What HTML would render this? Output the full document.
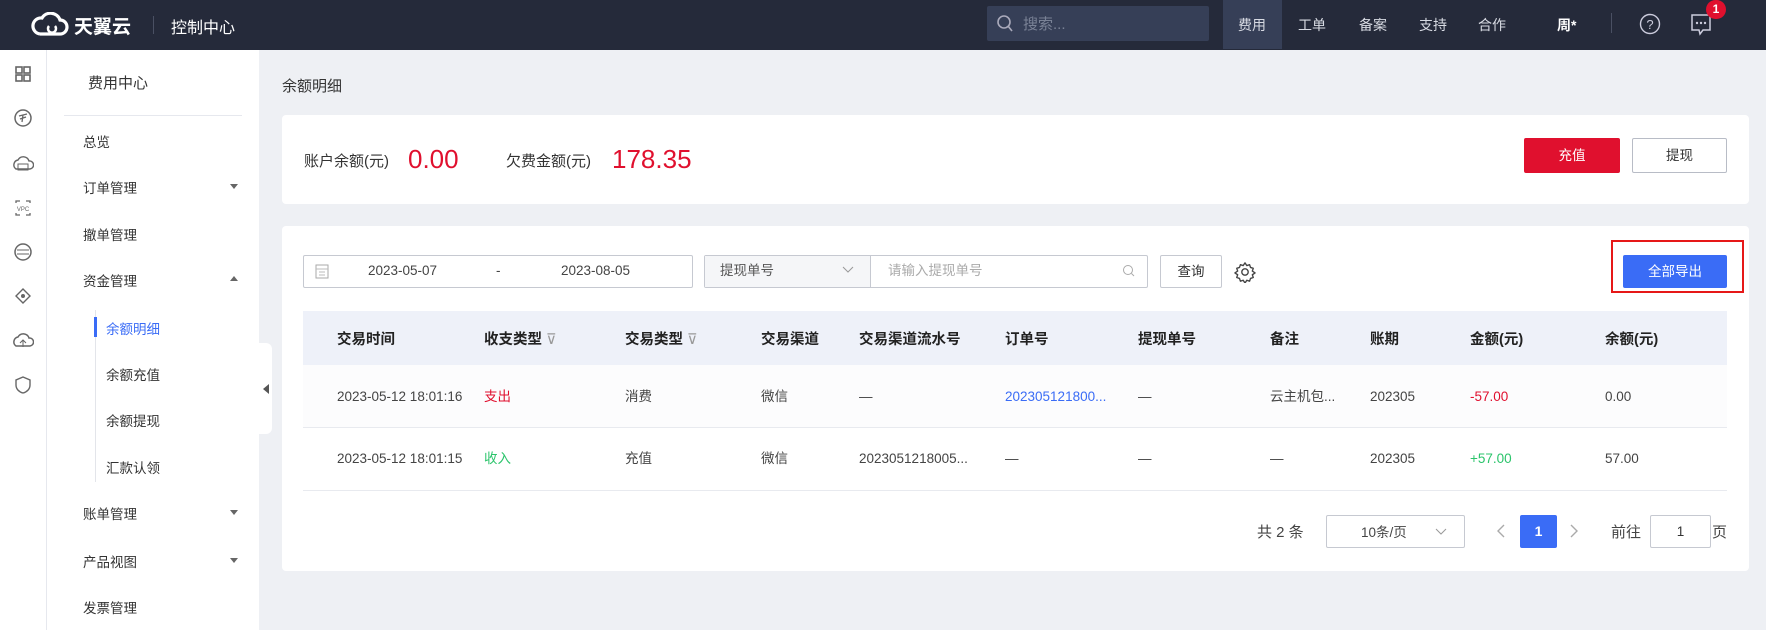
<!DOCTYPE html>
<html><head><meta charset="utf-8"><style>
*{margin:0;padding:0;box-sizing:border-box}
body{width:1766px;height:630px;overflow:hidden;background:#eef0f4;font-family:"Liberation Sans","Noto Sans CJK SC",sans-serif;color:#333;font-size:14px;position:relative}
.a{position:absolute;white-space:nowrap}
.top{position:absolute;left:0;top:0;width:1766px;height:50px;background:#252a3a}
.nav{color:#d8dbe3;font-size:14px;top:15px}
.side1{position:absolute;left:0;top:50px;width:47px;height:580px;background:#fff;border-right:1px solid #e6e8ee}
.side2{position:absolute;left:47px;top:50px;width:212px;height:580px;background:#fff}
.mi{font-size:13.5px;color:#333;left:83px}
.si{font-size:13.5px;color:#333;left:106px}
.arr{position:absolute;left:230px;width:0;height:0;border-left:4px solid transparent;border-right:4px solid transparent;border-top:5px solid #666}
.card{position:absolute;background:#fff;border-radius:4px}
.th{font-weight:bold;font-size:14.5px;color:#222;top:328px}
.td{font-size:13.5px;color:#444}
.cj{margin-top:-4px}
.ic{position:absolute;left:12px;width:22px;height:22px}
</style></head><body>
<div class="top"></div>
<svg class="a" style="left:30px;top:12px" width="42" height="26" viewBox="0 0 42 26"><path d="M10 22 H30 A7 7 0 0 0 30 8 A10 10 0 0 0 12 6 A8 8 0 0 0 10 22" fill="none" stroke="#fff" stroke-width="3.2"/><path d="M19 14 a4 4 0 1 0 6 0" fill="none" stroke="#fff" stroke-width="2.5"/></svg>
<div class="a" style="left:74px;top:12px;color:#fff;font-size:19px;font-weight:bold">天翼云</div>
<div class="a" style="left:153px;top:16px;width:1px;height:18px;background:#4a5063"></div>
<div class="a" style="left:171px;top:14px;color:#fff;font-size:16px">控制中心</div>
<div class="a" style="left:987px;top:6px;width:222px;height:35px;background:#363f57;border-radius:2px"></div>
<svg class="a" style="left:996px;top:14px" width="18" height="20"><circle cx="8" cy="8" r="6" fill="none" stroke="#aab" stroke-width="1.6"/><path d="M12 12 L16 17" stroke="#aab" stroke-width="1.6"/></svg>
<div class="a" style="left:1023px;top:13px;color:#7a8296;font-size:15px">搜索...</div>
<div class="a" style="left:1223px;top:0;width:59px;height:49px;background:#363f57"></div>
<div class="a nav" style="left:1238px">费用</div>
<div class="a nav" style="left:1298px">工单</div>
<div class="a nav" style="left:1359px">备案</div>
<div class="a nav" style="left:1419px">支持</div>
<div class="a nav" style="left:1478px">合作</div>
<div class="a nav" style="left:1557px;color:#fff;font-weight:bold">周*</div>
<div class="a" style="left:1611px;top:13px;width:1px;height:20px;background:#4a5063"></div>
<svg class="a" style="left:1639px;top:13px" width="22" height="22"><circle cx="11" cy="11" r="9.5" fill="none" stroke="#ccd" stroke-width="1.4"/><text x="11" y="16" text-anchor="middle" fill="#ccd" font-size="13" font-family="Liberation Sans">?</text></svg>
<svg class="a" style="left:1690px;top:13px" width="22" height="24"><path d="M2 2 H20 V17 H13 L10 21 L9 17 H2 Z" fill="none" stroke="#ccd" stroke-width="1.5"/><circle cx="7" cy="10" r="1.2" fill="#ccd"/><circle cx="11" cy="10" r="1.2" fill="#ccd"/><circle cx="15" cy="10" r="1.2" fill="#ccd"/></svg>
<div class="a" style="left:1706px;top:0;width:20px;height:19px;border-radius:10px;background:#e0102e;color:#fff;font-size:12px;font-weight:bold;text-align:center;line-height:19px">1</div>

<div class="side1"></div>
<svg class="ic" style="top:63px" viewBox="0 0 22 22"><g fill="none" stroke="#666" stroke-width="1.6"><rect x="4" y="4" width="6" height="6"/><rect x="12" y="4" width="6" height="6"/><rect x="4" y="12" width="6" height="6"/><rect x="12" y="12" width="6" height="6"/></g></svg>
<svg class="ic" style="top:107px" viewBox="0 0 22 22"><circle cx="11" cy="11" r="8" fill="none" stroke="#666" stroke-width="1.5"/><path d="M7 9 L15 7 M8 12 L14 10 M11 8 L10 15" stroke="#666" stroke-width="1.3"/></svg>
<svg class="ic" style="top:153px" viewBox="0 0 22 22"><path d="M4 16 A5 5 0 0 1 6 7 A6 6 0 0 1 17 8 A4 4 0 0 1 18 16 Z" fill="none" stroke="#666" stroke-width="1.4"/><rect x="6" y="11" width="10" height="6" fill="none" stroke="#666"/></svg>
<svg class="ic" style="top:197px" viewBox="0 0 22 22"><path d="M4 6 V4 H8 M14 4 H18 V6 M4 16 V18 H8 M14 18 H18 V16" fill="none" stroke="#666" stroke-width="1.3"/><text x="11" y="14" font-size="6" text-anchor="middle" fill="#666">VPC</text></svg>
<svg class="ic" style="top:241px" viewBox="0 0 22 22"><circle cx="11" cy="11" r="8" fill="none" stroke="#666" stroke-width="1.5"/><path d="M5 9 H17 M5 13 H17" stroke="#666"/></svg>
<svg class="ic" style="top:285px" viewBox="0 0 22 22"><path d="M11 4 L18 11 L11 18 L4 11 Z" fill="none" stroke="#666" stroke-width="1.4"/><circle cx="11" cy="11" r="2" fill="#666"/></svg>
<svg class="ic" style="top:330px" viewBox="0 0 22 22"><path d="M4 16 A5 5 0 0 1 6 7 A6 6 0 0 1 17 8 A4 4 0 0 1 18 16 Z" fill="none" stroke="#666" stroke-width="1.5"/><path d="M11 17 V10 M8 13 L11 10 L14 13" stroke="#666" fill="none"/></svg>
<svg class="ic" style="top:374px" viewBox="0 0 22 22"><path d="M11 3 L18 6 V11 C18 15 15 18 11 19 C7 18 4 15 4 11 V6 Z" fill="none" stroke="#666" stroke-width="1.4"/></svg>

<div class="side2"></div>
<div class="a" style="left:88px;top:72px;font-size:15px;color:#333">费用中心</div>
<div class="a" style="left:64px;top:115px;width:178px;height:1px;background:#e6e8ee"></div>
<div class="a mi" style="top:131px">总览</div>
<div class="a mi" style="top:177px">订单管理</div><div class="arr" style="top:184px"></div>
<div class="a mi" style="top:224px">撤单管理</div>
<div class="a mi" style="top:270px">资金管理</div><div class="a" style="left:230px;top:276px;border-left:4px solid transparent;border-right:4px solid transparent;border-bottom:5px solid #666;width:0;height:0"></div>
<div class="a" style="left:95px;top:310px;width:1px;height:172px;background:#e3e5ea"></div>
<div class="a" style="left:94px;top:317px;width:3px;height:20px;background:#3a6cf6"></div>
<div class="a si" style="top:318px;color:#3a6cf6">余额明细</div>
<div class="a si" style="top:364px">余额充值</div>
<div class="a si" style="top:410px">余额提现</div>
<div class="a si" style="top:457px">汇款认领</div>
<div class="a mi" style="top:503px">账单管理</div><div class="arr" style="top:510px"></div>
<div class="a mi" style="top:551px">产品视图</div><div class="arr" style="top:558px"></div>
<div class="a mi" style="top:597px">发票管理</div>
<div class="a" style="left:259px;top:343px;width:13px;height:91px;background:#fff;border-radius:0 6px 6px 0"></div>
<div class="a" style="left:263px;top:384px;border-top:5px solid transparent;border-bottom:5px solid transparent;border-right:6px solid #555;width:0;height:0"></div>

<div class="a" style="left:282px;top:75px;font-size:15px;color:#333">余额明细</div>
<div class="card" style="left:282px;top:115px;width:1467px;height:89px"></div>
<div class="a" style="left:304px;top:150px;font-size:15px;color:#333">账户余额(元)</div>
<div class="a" style="left:408px;top:144px;font-size:26px;color:#e0102e">0.00</div>
<div class="a" style="left:506px;top:150px;font-size:15px;color:#333">欠费金额(元)</div>
<div class="a" style="left:612px;top:144px;font-size:26px;color:#e0102e">178.35</div>
<div class="a" style="left:1524px;top:138px;width:96px;height:35px;background:#e0102e;border-radius:2px;color:#fff;font-size:13.5px;text-align:center;line-height:35px">充值</div>
<div class="a" style="left:1632px;top:138px;width:95px;height:35px;border:1px solid #b8bcc6;border-radius:2px;color:#333;font-size:13.5px;text-align:center;line-height:33px;background:#fff">提现</div>

<div class="card" style="left:282px;top:226px;width:1467px;height:345px"></div>
<div class="a" style="left:303px;top:255px;width:390px;height:33px;border:1px solid #c6c9d1;border-radius:2px"></div>
<svg class="a" style="left:315px;top:263px" width="14" height="16"><rect x="1" y="2" width="12" height="13" fill="none" stroke="#aaa"/><path d="M1 6 H13 M4 9 H10 M4 12 H10" stroke="#bbb"/></svg>
<div class="a td" style="left:368px;top:263px">2023-05-07</div>
<div class="a td" style="left:496px;top:263px">-</div>
<div class="a td" style="left:561px;top:263px">2023-08-05</div>
<div class="a" style="left:704px;top:255px;width:444px;height:33px;border:1px solid #c6c9d1;border-radius:2px"></div>
<div class="a" style="left:705px;top:256px;width:166px;height:31px;background:#f5f6f8;border-right:1px solid #c6c9d1"></div>
<div class="a td cj" style="left:720px;top:263px;color:#555">提现单号</div>
<svg class="a" style="left:842px;top:266px" width="12" height="8"><path d="M1 1 L6 6 L11 1" fill="none" stroke="#999"/></svg>
<div class="a td cj" style="left:888px;top:263px;color:#aaa">请输入提现单号</div>
<svg class="a" style="left:1122px;top:264px" width="14" height="14"><circle cx="6" cy="6" r="4.5" fill="none" stroke="#aaa"/><path d="M9.5 9.5 L12 12" stroke="#aaa"/></svg>
<div class="a" style="left:1160px;top:255px;width:62px;height:33px;border:1px solid #c6c9d1;border-radius:2px;text-align:center;line-height:31px;font-size:13.5px">查询</div>
<svg class="a" style="left:1234px;top:261px" width="22" height="22" viewBox="0 0 24 24"><path d="M12 2 l2 3 3-1 1 3 3 1-1 3 3 2-3 2 1 3-3 1-1 3-3-1-2 3-2-3-3 1-1-3-3-1 1-3-3-2 3-2-1-3 3-1 1-3 3 1z" fill="none" stroke="#444" stroke-width="1.5" stroke-linejoin="round"/><circle cx="12" cy="12" r="3.5" fill="none" stroke="#444" stroke-width="1.5"/></svg>
<div class="a" style="left:1611px;top:240px;width:133px;height:53px;border:2px solid #e61818"></div>
<div class="a" style="left:1623px;top:255px;width:104px;height:33px;background:#3a6cf6;border-radius:2px;color:#fff;text-align:center;line-height:33px;font-size:13.5px">全部导出</div>

<div class="a" style="left:303px;top:311px;width:1424px;height:54px;background:#eef1f9"></div>
<div class="a" style="left:303px;top:365px;width:1424px;height:63px;background:#fcfcfd;border-bottom:1px solid #e8eaef"></div>
<div class="a" style="left:303px;top:428px;width:1424px;height:63px;border-bottom:1px solid #e8eaef"></div>
<div class="a th" style="left:337px">交易时间</div>
<div class="a th" style="left:484px">收支类型 <span style="color:#999;font-weight:normal">⊽</span></div>
<div class="a th" style="left:625px">交易类型 <span style="color:#999;font-weight:normal">⊽</span></div>
<div class="a th" style="left:761px">交易渠道</div>
<div class="a th" style="left:859px">交易渠道流水号</div>
<div class="a th" style="left:1005px">订单号</div>
<div class="a th" style="left:1138px">提现单号</div>
<div class="a th" style="left:1270px">备注</div>
<div class="a th" style="left:1370px">账期</div>
<div class="a th" style="left:1470px">金额(元)</div>
<div class="a th" style="left:1605px">余额(元)</div>

<div class="a td" style="left:337px;top:389px">2023-05-12 18:01:16</div>
<div class="a td cj" style="left:484px;top:389px;color:#e0102e">支出</div>
<div class="a td cj" style="left:625px;top:389px">消费</div>
<div class="a td cj" style="left:761px;top:389px">微信</div>
<div class="a td" style="left:859px;top:389px">—</div>
<div class="a td" style="left:1005px;top:389px;color:#3a6cf6">202305121800...</div>
<div class="a td" style="left:1138px;top:389px">—</div>
<div class="a td cj" style="left:1270px;top:389px">云主机包...</div>
<div class="a td" style="left:1370px;top:389px">202305</div>
<div class="a td" style="left:1470px;top:389px;color:#e0102e">-57.00</div>
<div class="a td" style="left:1605px;top:389px">0.00</div>

<div class="a td" style="left:337px;top:451px">2023-05-12 18:01:15</div>
<div class="a td cj" style="left:484px;top:451px;color:#2bc46b">收入</div>
<div class="a td cj" style="left:625px;top:451px">充值</div>
<div class="a td cj" style="left:761px;top:451px">微信</div>
<div class="a td" style="left:859px;top:451px">2023051218005...</div>
<div class="a td" style="left:1005px;top:451px">—</div>
<div class="a td" style="left:1138px;top:451px">—</div>
<div class="a td" style="left:1270px;top:451px">—</div>
<div class="a td" style="left:1370px;top:451px">202305</div>
<div class="a td" style="left:1470px;top:451px;color:#2bc46b">+57.00</div>
<div class="a td" style="left:1605px;top:451px">57.00</div>

<div class="a" style="left:1257px;top:521px;font-size:15px;color:#444">共 2 条</div>
<div class="a" style="left:1326px;top:515px;width:139px;height:33px;border:1px solid #c6c9d1;border-radius:2px"></div>
<div class="a td" style="left:1361px;top:521px">10条/页</div>
<svg class="a" style="left:1435px;top:528px" width="12" height="8"><path d="M1 1 L6 6 L11 1" fill="none" stroke="#999"/></svg>
<svg class="a" style="left:1496px;top:524px" width="10" height="14"><path d="M8 1 L2 7 L8 13" fill="none" stroke="#aaa" stroke-width="1.4"/></svg>
<div class="a" style="left:1520px;top:515px;width:37px;height:33px;background:#3a6cf6;border-radius:2px;color:#fff;font-weight:bold;text-align:center;line-height:33px;font-size:14px">1</div>
<svg class="a" style="left:1569px;top:524px" width="10" height="14"><path d="M2 1 L8 7 L2 13" fill="none" stroke="#aaa" stroke-width="1.4"/></svg>
<div class="a" style="left:1611px;top:521px;font-size:15px;color:#444">前往</div>
<div class="a" style="left:1650px;top:515px;width:61px;height:33px;border:1px solid #c6c9d1;border-radius:2px;text-align:center;line-height:31px;font-size:13.5px">1</div>
<div class="a" style="left:1712px;top:521px;font-size:15px;color:#444">页</div>
</body></html>
